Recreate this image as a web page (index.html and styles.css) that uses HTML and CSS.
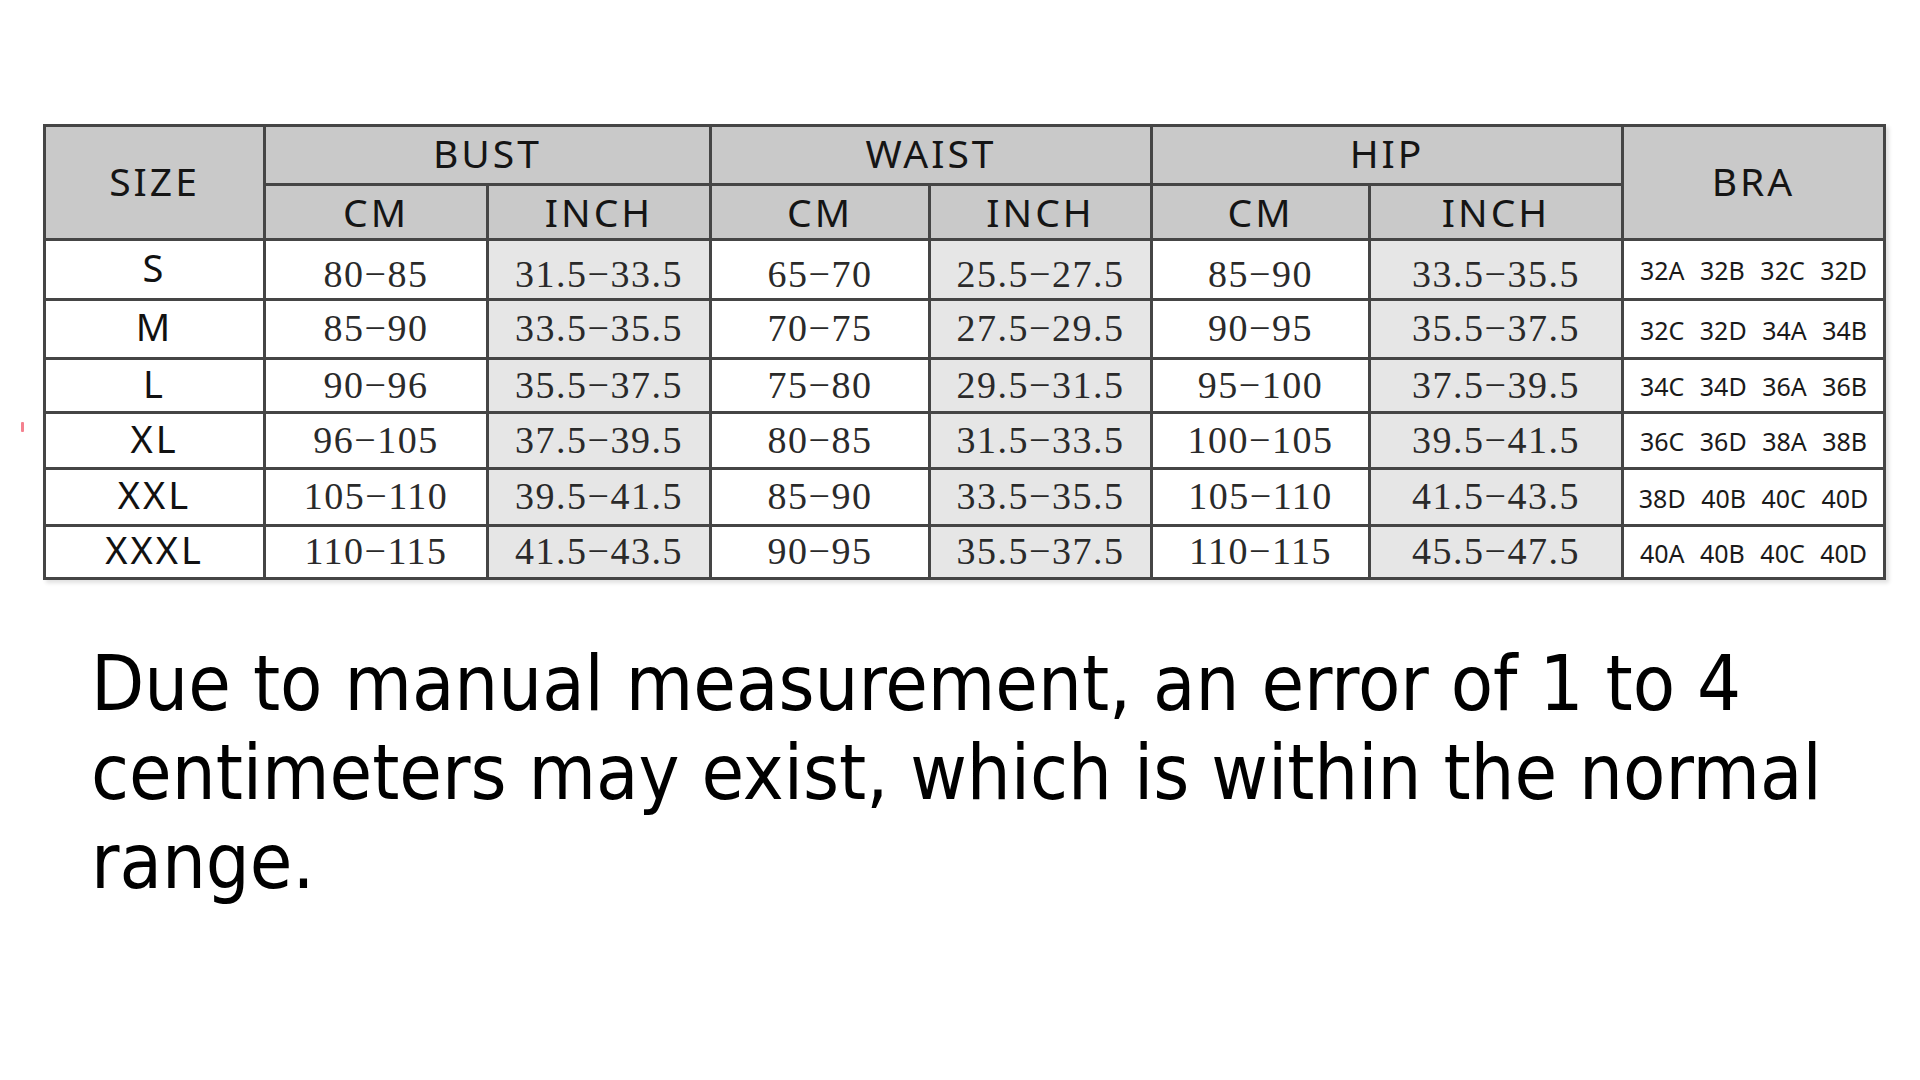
FILE: index.html
```html
<!DOCTYPE html>
<html lang="en">
<head>
<meta charset="utf-8">
<title>Size Chart</title>
<link rel="stylesheet" href="styles.css">
</head>
<body>
<span class="mark"></span>
<main class="page">
  <table class="chart">
    <colgroup>
      <col class="c-size"><col class="c-bcm"><col class="c-bin"><col class="c-wcm"><col class="c-win"><col class="c-hcm"><col class="c-hin"><col class="c-bra">
    </colgroup>
    <thead>
      <tr class="h1">
        <th class="span2" rowspan="2">SIZE</th>
        <th colspan="2">BUST</th>
        <th colspan="2">WAIST</th>
        <th colspan="2">HIP</th>
        <th class="span2" rowspan="2">BRA</th>
      </tr>
      <tr class="h2">
        <th>CM</th><th>INCH</th><th>CM</th><th>INCH</th><th>CM</th><th>INCH</th>
      </tr>
    </thead>
    <tbody>
      <tr class="r1"><td class="sz">S</td><td class="num first">80−85</td><td class="num in first">31.5−33.5</td><td class="num first">65−70</td><td class="num in first">25.5−27.5</td><td class="num first">85−90</td><td class="num in first">33.5−35.5</td><td class="bra">32A 32B 32C 32D</td></tr>
      <tr class="r2"><td class="sz">M</td><td class="num">85−90</td><td class="num in">33.5−35.5</td><td class="num">70−75</td><td class="num in">27.5−29.5</td><td class="num">90−95</td><td class="num in">35.5−37.5</td><td class="bra">32C 32D 34A 34B</td></tr>
      <tr class="r3"><td class="sz">L</td><td class="num">90−96</td><td class="num in">35.5−37.5</td><td class="num">75−80</td><td class="num in">29.5−31.5</td><td class="num">95−100</td><td class="num in">37.5−39.5</td><td class="bra">34C 34D 36A 36B</td></tr>
      <tr class="r4"><td class="sz">XL</td><td class="num">96−105</td><td class="num in">37.5−39.5</td><td class="num">80−85</td><td class="num in">31.5−33.5</td><td class="num">100−105</td><td class="num in">39.5−41.5</td><td class="bra">36C 36D 38A 38B</td></tr>
      <tr class="r5"><td class="sz">XXL</td><td class="num">105−110</td><td class="num in">39.5−41.5</td><td class="num">85−90</td><td class="num in">33.5−35.5</td><td class="num">105−110</td><td class="num in">41.5−43.5</td><td class="bra">38D 40B 40C 40D</td></tr>
      <tr class="r6"><td class="sz">XXXL</td><td class="num">110−115</td><td class="num in">41.5−43.5</td><td class="num">90−95</td><td class="num in">35.5−37.5</td><td class="num">110−115</td><td class="num in">45.5−47.5</td><td class="bra">40A 40B 40C 40D</td></tr>
    </tbody>
  </table>
  <p class="note">Due to manual measurement, an error of 1 to 4 centimeters may exist, which is within the normal range.</p>
</main>
</body>
</html>
```

FILE: styles.css
```css
html, body {
  margin: 0;
  padding: 0;
  background: #ffffff;
}

body {
  width: 1920px;
  height: 1080px;
  overflow: hidden;
  position: relative;
  font-family: "Noto Sans", "DejaVu Sans", sans-serif;
  color: #111;
}

.mark {
  position: absolute;
  left: 21px;
  top: 422px;
  width: 3px;
  height: 10px;
  background: #f4818f;
  border-radius: 1px;
}

.page {
  padding: 124px 0 0 43px;
}

.chart {
  border-collapse: collapse;
  table-layout: fixed;
  width: 1840px;
  border: 3px solid #3a3a3a;
  box-shadow: 3px 3px 4px rgba(0, 0, 0, 0.12);
}

.c-size { width: 220px; }
.c-bcm { width: 223px; }
.c-bin { width: 223px; }
.c-wcm { width: 219px; }
.c-win { width: 222px; }
.c-hcm { width: 218px; }
.c-hin { width: 253px; }
.c-bra { width: 262px; }

.chart th,
.chart td {
  border: 3px solid #454545;
  padding: 0;
  text-align: center;
  vertical-align: middle;
  white-space: nowrap;
}

.chart th {
  background: #c9c9c9;
  font-family: "Noto Sans", "DejaVu Sans", sans-serif;
  font-weight: 400;
  font-size: 39px;
  letter-spacing: 3px;
  color: #151515;
  line-height: 1;
}

.h1 { height: 59px; }
.h2 { height: 55px; }
.h1 th { padding-bottom: 6px; }
.h2 th { padding-bottom: 2px; }
.h1 th.span2 { padding-bottom: 5px; }

.r1 { height: 60px; }
.r2 { height: 59px; }
.r3 { height: 54px; }
.r4 { height: 56px; }
.r5 { height: 57px; }
.r6 { height: 53px; }

.sz {
  font-family: "Noto Sans", "DejaVu Sans", sans-serif;
  font-size: 38px;
  letter-spacing: 3px;
  color: #111;
  background: #ffffff;
  line-height: 1;
  padding-bottom: 6px !important;
}

.num {
  font-family: "Liberation Serif", "DejaVu Serif", serif;
  font-size: 38px;
  color: #2a2a2a;
  letter-spacing: 1.5px;
  background: #ffffff;
  line-height: 1;
  padding-bottom: 2px !important;
}

.num.first {
  padding-top: 8px !important;
  padding-bottom: 0 !important;
}

.num.in {
  background: #e6e6e6;
}

.bra {
  font-family: "Noto Sans", "DejaVu Sans", sans-serif;
  font-size: 25px;
  word-spacing: 9px;
  color: #1a1a1a;
  background: #ffffff;
  line-height: 1;
  padding-top: 2px !important;
}

.note {
  margin: 59px 0 0 48px;
  width: 1800px;
  font-family: "DejaVu Sans Condensed", "DejaVu Sans", sans-serif;
  font-stretch: condensed;
  font-size: 77px;
  line-height: 89px;
  color: #000;
}
```
